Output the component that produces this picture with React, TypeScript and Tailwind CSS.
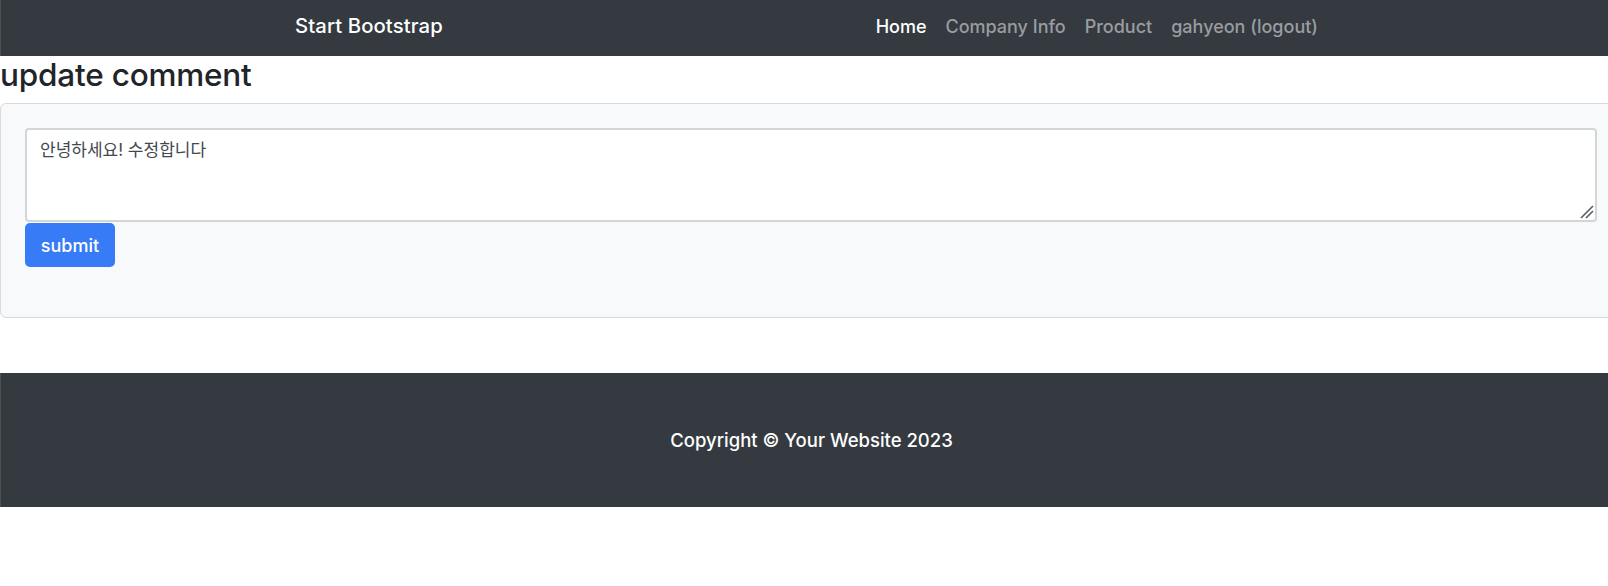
import React from "react";

export default function App() {
  const font = { fontFamily: 'Inter, "Noto Sans CJK KR", "Liberation Sans", sans-serif' };
  return (
    <div className="w-full overflow-hidden bg-white min-h-[586px]" style={font}>
      <div className="w-[1622px]">
        <nav className="h-[56px] bg-[#343a40] border-l border-[#4b5055] flex items-center pb-[3px]">
          <div className="ml-[294px] w-[1023px] flex items-center justify-between">
            <span className="text-[20.3px] text-white font-medium tracking-[0.1px] -mt-[1px]">Start Bootstrap</span>
            <div className="flex items-center gap-[19px] text-[18px] font-medium">
              <span className="text-white">Home</span>
              <span className="text-[#9a9da0]">Company Info</span>
              <span className="text-[#9a9da0]">Product</span>
              <span className="text-[#9a9da0]">gahyeon (logout)</span>
            </div>
          </div>
        </nav>
        <h2 className="text-[31.5px] leading-[36px] font-medium text-[#212529] mt-[1px] mb-[10px] tracking-[-0.2px]">update comment</h2>
        <div className="bg-[#f8f9fa] border border-[#d7d9db] rounded-[6px] px-[24px] pt-[24px] pb-[50px]">
          <div className="relative">
            <textarea
              defaultValue="안녕하세요! 수정합니다"
              className="block w-full h-[94px] resize-none bg-white border-2 border-[#d3d6d9] rounded-[4px] px-[13px] pt-[8px] text-[17px] text-[#43484d] outline-none"
              style={{ fontFamily: 'Inter, "Noto Sans CJK KR", sans-serif' }}
            />
            <svg className="absolute right-[3px] bottom-[3px]" width="14" height="14" viewBox="0 0 14 14">
              <line x1="1" y1="13" x2="13" y2="1" stroke="#5f6368" strokeWidth="1.7" />
              <line x1="6" y1="13" x2="13" y2="6" stroke="#5f6368" strokeWidth="1.7" />
            </svg>
          </div>
          <button className="mt-[1px] h-[44px] w-[90px] bg-[#377cf6] rounded-[5px] text-white text-[18px] font-medium">
            submit
          </button>
        </div>
        <footer className="mt-[55px] h-[134px] bg-[#343a40] border-l border-[#4b5055] flex items-center justify-center">
          <span className="text-white text-[18.5px] font-medium mt-[2px]">Copyright © Your Website 2023</span>
        </footer>
      </div>
    </div>
  );
}
